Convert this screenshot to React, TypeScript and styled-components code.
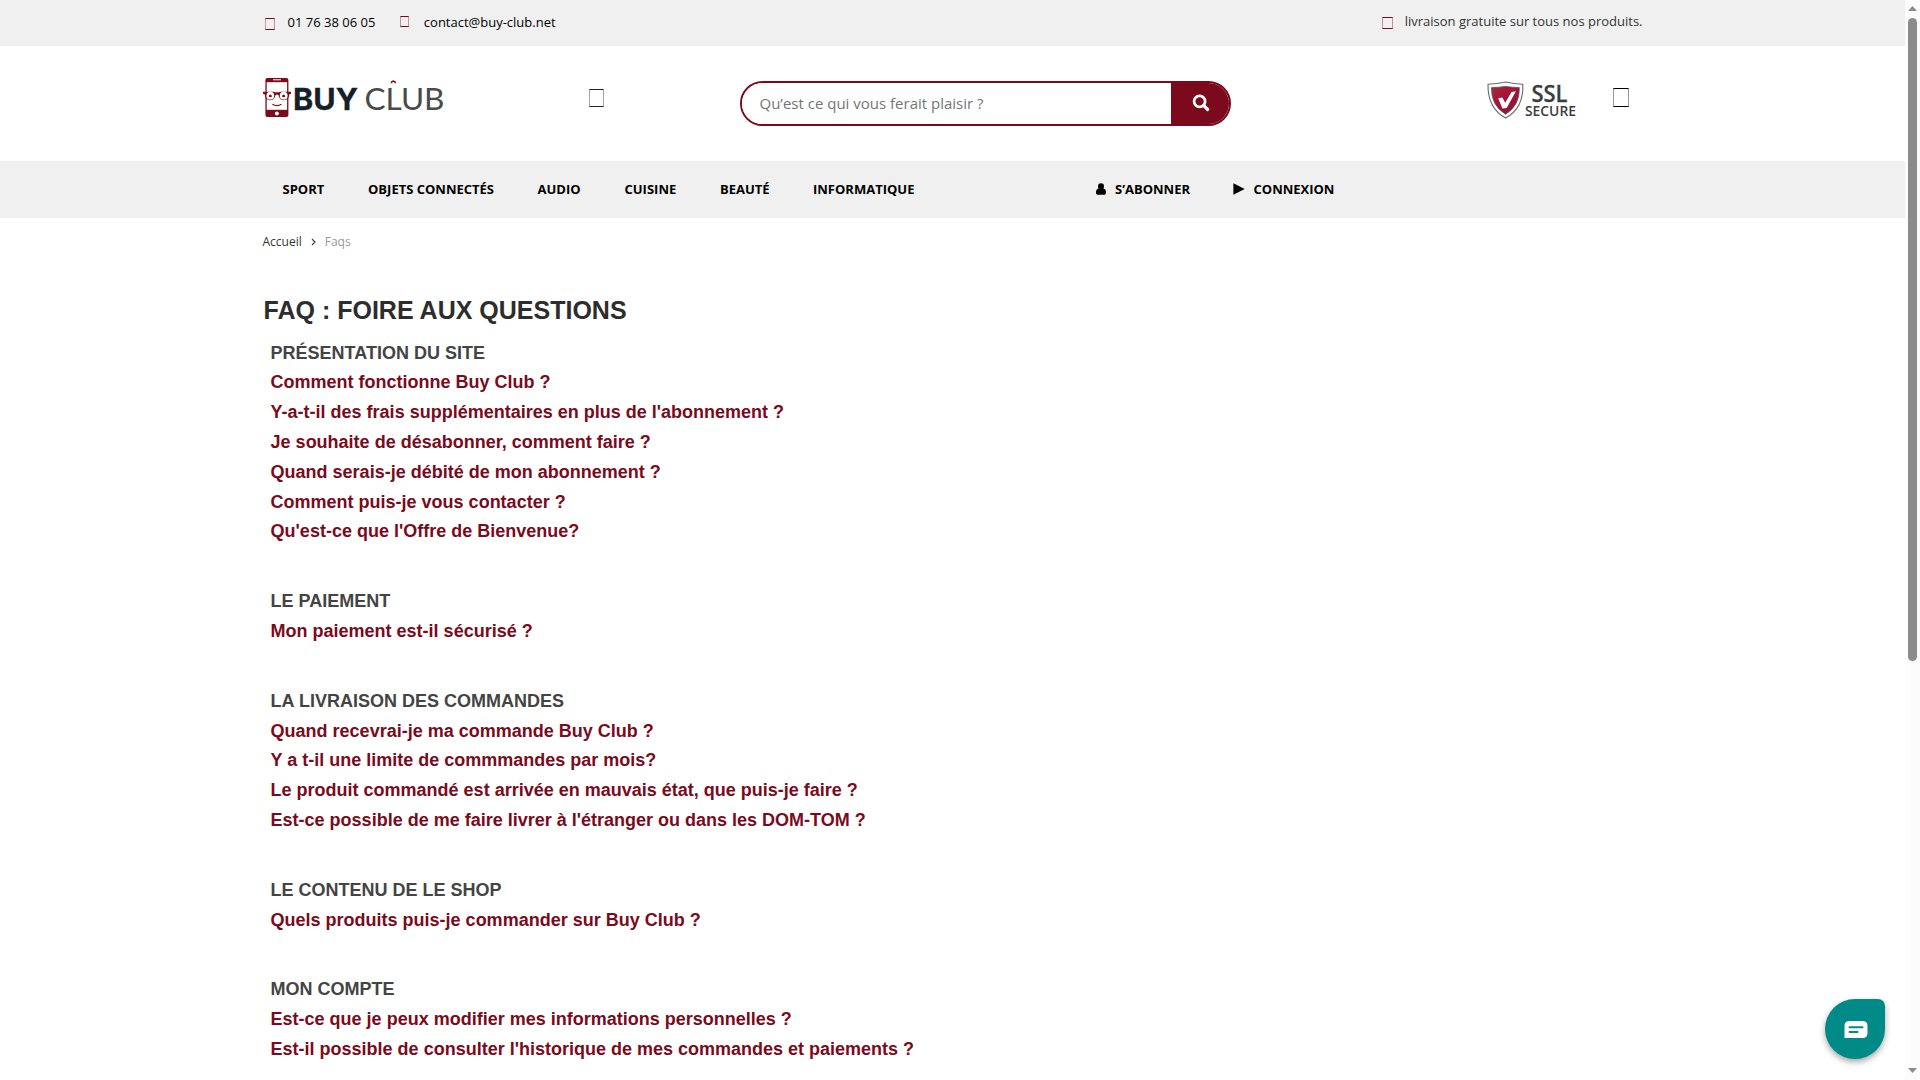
import React from "react";
import styled, { createGlobalStyle } from "styled-components";

const WINE = "#7b0a1c";

const GlobalStyle = createGlobalStyle`
  * { box-sizing: border-box; }
  body { margin: 0; background: #fff; overflow: hidden; font-family: "Open Sans", "Noto Sans", sans-serif; }
`;

const Window = styled.div`
  display: flex;
  width: 1920px;
  height: 1080px;
  overflow: hidden;
`;

const Page = styled.div`
  flex: 1;
  min-width: 0;
  height: 1080px;
  overflow: hidden;
`;

const TopBar = styled.div`
  display: flex;
  align-items: flex-start;
  height: 46px;
  padding: 0 262.5px 0 265px;
  background: #f0f0f0;
  font-size: 13px;
  line-height: 18px;
  color: #000;
`;

const Contact = styled.span<{ $left?: number; $top?: number }>`
  display: flex;
  margin-left: ${(p) => p.$left ?? 0}px;
  padding-top: ${(p) => p.$top ?? 13}px;
  white-space: nowrap;
`;

const Shipping = styled(Contact)`
  margin-left: auto;
  color: #333;
`;

const Glyph = styled.i<{ $w: number; $h: number; $color: string; $top?: number; $gap?: number }>`
  flex: none;
  width: ${(p) => p.$w}px;
  height: ${(p) => p.$h}px;
  margin-top: ${(p) => p.$top ?? 0}px;
  margin-right: ${(p) => p.$gap ?? 0}px;
  border: 1px solid ${(p) => p.$color};
  border-left-color: ${(p) => p.$color}66;
  border-right-color: ${(p) => p.$color}66;
`;

const Header = styled.header`
  display: flex;
  align-items: flex-start;
  height: 115px;
  padding: 0 276px 0 262px;
`;

const Logo = styled.svg`
  flex: none;
  width: 184px;
  height: 44px;
  margin-top: 30px;
  margin-right: 143px;
`;

const Search = styled.form`
  display: flex;
  width: 491px;
  height: 45px;
  margin: 35px 0 0 135.5px;
  border: 2px solid ${WINE};
  border-radius: 23px;
  overflow: hidden;
`;

const SearchInput = styled.input`
  flex: 1;
  min-width: 0;
  padding: 0 18px 2px 18px;
  border: 0;
  outline: 0;
  background: #fff;
  font: 15px "Open Sans", sans-serif;
  &::placeholder { color: #757575; opacity: 1; }
`;

const SearchButton = styled.button`
  display: flex;
  align-items: center;
  justify-content: center;
  width: 58px;
  padding: 0 0 2px 2px;
  border: 0;
  background: ${WINE};
`;

const Ssl = styled.svg`
  flex: none;
  width: 92px;
  height: 42px;
  margin: 33px 35px 0 auto;
`;

const Nav = styled.nav`
  display: flex;
  align-items: center;
  height: 57px;
  padding: 0 0 2px 260px;
  background: #f0f0f0;
`;

const NavLink = styled.a<{ $width: number }>`
  display: flex;
  align-items: center;
  flex: none;
  width: ${(p) => p.$width}px;
  padding-left: 22.5px;
  color: #000;
  font-size: 13px;
  font-weight: 700;
  white-space: nowrap;
`;

const NavIcon = styled.svg`
  width: 12px;
  height: 12px;
  margin-right: 8.5px;
`;

const Breadcrumb = styled.div`
  display: flex;
  align-items: center;
  height: 48px;
  padding: 0 0 2px 262.5px;
  color: #333;
  font-size: 12px;
`;

const Chevron = styled.svg`
  width: 5px;
  height: 8px;
  margin: 2px 9px 0 9px;
`;

const Current = styled.span`
  color: #999;
`;

const Faq = styled.main`
  padding: 24px 0 0 263.6px;
  font-family: "Liberation Sans", Arial, sans-serif;
  font-weight: 700;
`;

const Title = styled.h1`
  margin: 0 0 8.65px;
  color: #2d2d2d;
  font-size: 25px;
  line-height: 40px;
`;

const Section = styled.section`
  margin-bottom: 40px;
  padding-left: 7px;
  font-size: 18px;
  line-height: 29.79px;
`;

const SectionTitle = styled.h2`
  margin: 0;
  color: #444;
  font: inherit;
`;

const Question = styled.a`
  display: block;
  color: ${WINE};
  white-space: nowrap;
`;

const Scrollbar = styled.div`
  display: flex;
  flex-direction: column;
  align-items: center;
  width: 15px;
  height: 1080px;
  padding: 6px 0 7px;
  background: #fcfcfc;
`;

const Arrow = styled.i<{ $down?: boolean }>`
  width: 9px;
  height: 5px;
  background: #8b8b8b;
  clip-path: ${(p) => (p.$down ? "polygon(0 0, 100% 0, 50% 100%)" : "polygon(50% 0, 100% 100%, 0 100%)")};
`;

const Thumb = styled.div`
  width: 9px;
  height: 643px;
  margin: 7px 0 auto;
  border-radius: 5px;
  background: #8b8b8b;
`;

const Chat = styled.button`
  position: fixed;
  left: 1825px;
  top: 999px;
  display: flex;
  align-items: center;
  justify-content: center;
  width: 60px;
  height: 60px;
  padding: 2px 0 0 1px;
  border: 0;
  border-radius: 30px 7px 30px 30px;
  background: #008a87;
  box-shadow: 0 3px 6px rgba(0, 0, 0, 0.35);
`;

const sections = [
  {
    title: "PRÉSENTATION DU SITE",
    questions: [
      "Comment fonctionne Buy Club ?",
      "Y-a-t-il des frais supplémentaires en plus de l'abonnement ?",
      "Je souhaite de désabonner, comment faire ?",
      "Quand serais-je débité de mon abonnement ?",
      "Comment puis-je vous contacter ?",
      "Qu'est-ce que l'Offre de Bienvenue?",
    ],
  },
  { title: "LE PAIEMENT", questions: ["Mon paiement est-il sécurisé ?"] },
  {
    title: "LA LIVRAISON DES COMMANDES",
    questions: [
      "Quand recevrai-je ma commande Buy Club ?",
      "Y a t-il une limite de commmandes par mois?",
      "Le produit commandé est arrivée en mauvais état, que puis-je faire ?",
      "Est-ce possible de me faire livrer à l'étranger ou dans les DOM-TOM ?",
    ],
  },
  { title: "LE CONTENU DE LE SHOP", questions: ["Quels produits puis-je commander sur Buy Club ?"] },
  {
    title: "MON COMPTE",
    questions: [
      "Est-ce que je peux modifier mes informations personnelles ?",
      "Est-il possible de consulter l'historique de mes commandes et paiements ?",
    ],
  },
];

const categories = [
  { label: "SPORT", width: 85.5 },
  { label: "OBJETS CONNECTÉS", width: 169.5 },
  { label: "AUDIO", width: 87 },
  { label: "CUISINE", width: 95.5 },
  { label: "BEAUTÉ", width: 93 },
  { label: "INFORMATIQUE", width: 281.5 },
];

function BuyClubLogo() {
  return (
    <Logo viewBox="0 0 184 44">
      <rect x="3.4" y="2" width="23" height="39" rx="2" fill={WINE} />
      <path d="M4.7 6.2h20.4v27.6H4.700z" fill="#fff" />
      <path d="M1 15.8h10.5q3.5 1 7 0H29v2l-1.8.7q-.2 5.700-5.200 5.700-4.600 0-5.600-5.300-1.400-.8-2.800 0-1 5.300-5.600 5.300-5 0-5.200-5.700L1 17.800z" fill={WINE} />
      <circle cx="8.300" cy="19.700" r="3.900" fill="#fff" />
      <circle cx="21.700" cy="19.700" r="3.900" fill="#fff" />
      <path d="M6.500 20.200q1.800-3.400 3.600 0-1.800 2-3.600 0zM19.900 20.200q1.800-3.400 3.600 0-1.800 2-3.600 0z" fill={WINE} />
      <path d="M10.300 28.300q4.600 2.600 9.200 0" fill="none" stroke={WINE} strokeWidth="1.100" />
      <path d="M11 3.800h8" stroke="#fff" strokeWidth="1" />
      <circle cx="14.900" cy="37.400" r="2" fill="#fff" />
      <text x="31" y="33.600" fontFamily="Inter" fontWeight="700" fontSize="30" fill="#16202b" stroke="#16202b" strokeWidth=".3" textLength="65" lengthAdjust="spacingAndGlyphs">BUY</text>
      <text x="102.500" y="33.600" fontFamily="Lato" fontWeight="400" fontSize="30" fill="#4a4a4a" textLength="80" lengthAdjust="spacingAndGlyphs">CLUB</text>
      <path d="M129.300 7.200q0-1.800 2-2.200 2.100.4 2.100 2.200" fill="none" stroke={WINE} strokeWidth="1.500" />
    </Logo>
  );
}

function SslBadge() {
  return (
    <Ssl viewBox="0 0 92 42">
      <defs>
        <linearGradient id="shield" x1="0" y1="0" x2="1" y2="1">
          <stop offset="0" stopColor="#a62a3c" />
          <stop offset=".5" stopColor="#a90f35" />
          <stop offset="1" stopColor="#75203f" />
        </linearGradient>
      </defs>
      <path d="M2 5.200q9-.5 17.600-2.200Q28 4.700 36.800 5.200 38 29 19.600 39 1.500 29 2 5.200z" fill="#fff" stroke="#6b6b6b" strokeWidth="1.100" />
      <path d="M5.500 8.600q7.500-.2 14.100-1.200 7 1 13.700 1.200Q34 26.500 19.600 35.300 5 26.500 5.500 8.600z" fill="url(#shield)" stroke="#555" strokeWidth=".8" />
      <path d="M12.200 19.300l4.200-.8 2.800 5.300 6.300-10.800 4.400-.7-9.200 16.700-4.300.5z" fill="#fff" />
      <text x="45.500" y="22.800" fontFamily="Open Sans" fontWeight="600" fontSize="23.500" fill="#3a3d40" stroke="#3a3d40" strokeWidth=".3" textLength="36" lengthAdjust="spacingAndGlyphs">SSL</text>
      <text x="39" y="37" fontFamily="Open Sans" fontWeight="600" fontSize="14.500" fill="#3a3d40" textLength="51" lengthAdjust="spacingAndGlyphs">SECURE</text>
    </Ssl>
  );
}

export default function App() {
  return (
    <Window>
      <GlobalStyle />
      <Page>
        <TopBar>
          <Contact>
            <Glyph $w={10} $h={12} $color={WINE} $top={5} $gap={12.5} />
            01 76 38 06 05
          </Contact>
          <Contact $left={25}>
            <Glyph $w={9} $h={11} $color={WINE} $top={3} $gap={14.5} />
            contact@buy-club.net
          </Contact>
          <Shipping $top={12}>
            <Glyph $w={11} $h={12} $color={WINE} $top={5} $gap={12} />
            livraison gratuite sur tous nos produits.
          </Shipping>
        </TopBar>
        <Header>
          <BuyClubLogo />
          <Glyph $w={15} $h={18} $color="#222222" $top={43} />
          <Search>
            <SearchInput placeholder="Qu’est ce qui vous ferait plaisir ?" />
            <SearchButton type="button" aria-label="Rechercher">
              <svg width="18" height="18" viewBox="0 0 18 18" fill="none" stroke="#fff">
                <circle cx="7.600" cy="7.400" r="5.500" strokeWidth="2.700" />
                <path d="M11.800 11.700l3.900 3.800" strokeWidth="3.200" strokeLinecap="round" />
              </svg>
            </SearchButton>
          </Search>
          <SslBadge />
          <Glyph $w={16} $h={19} $color="#000000" $top={42} />
        </Header>
        <Nav>
          {categories.map((c) => (
            <NavLink key={c.label} $width={c.width}>{c.label}</NavLink>
          ))}
          <NavLink $width={138.5}>
            <NavIcon viewBox="0 0 12 12">
              <path d="M6 .2a3 3 0 0 1 3 3c0 .8-.2 1.600-.6 2.200 1.800.4 2.600 1.800 2.600 4 0 1.600-.8 2.400-2 2.400H3c-1.200 0-2-.8-2-2.400 0-2.200.8-3.600 2.600-4A4 4 0 0 1 3 3.200a3 3 0 0 1 3-3z" />
            </NavIcon>
            S’ABONNER
          </NavLink>
          <NavLink $width={130}>
            <NavIcon viewBox="0 0 12 12"><path d="M.4.300L11.700 6 .4 11.700z" /></NavIcon>
            CONNEXION
          </NavLink>
        </Nav>
        <Breadcrumb>
          Accueil
          <Chevron viewBox="0 0 5 8"><path d="M1 1l3 3-3 3" fill="none" stroke="#444" strokeWidth="1.200" /></Chevron>
          <Current>Faqs</Current>
        </Breadcrumb>
        <Faq>
          <Title>FAQ : FOIRE AUX QUESTIONS</Title>
          {sections.map((s) => (
            <Section key={s.title}>
              <SectionTitle>{s.title}</SectionTitle>
              {s.questions.map((q) => <Question key={q}>{q}</Question>)}
            </Section>
          ))}
        </Faq>
      </Page>
      <Scrollbar>
        <Arrow />
        <Thumb />
        <Arrow $down />
      </Scrollbar>
      <Chat aria-label="Chat">
        <svg width="24" height="18" viewBox="0 0 24 18">
          <path d="M5.500 0h13Q23.500 0 23.500 5v7q0 5-5 5H.5V5q0-5 5-5z" fill="#fff" />
          <path d="M5.500 6.200h13M5.500 11h8" stroke="#008a87" strokeWidth="2" strokeLinecap="round" />
        </svg>
      </Chat>
    </Window>
  );
}
